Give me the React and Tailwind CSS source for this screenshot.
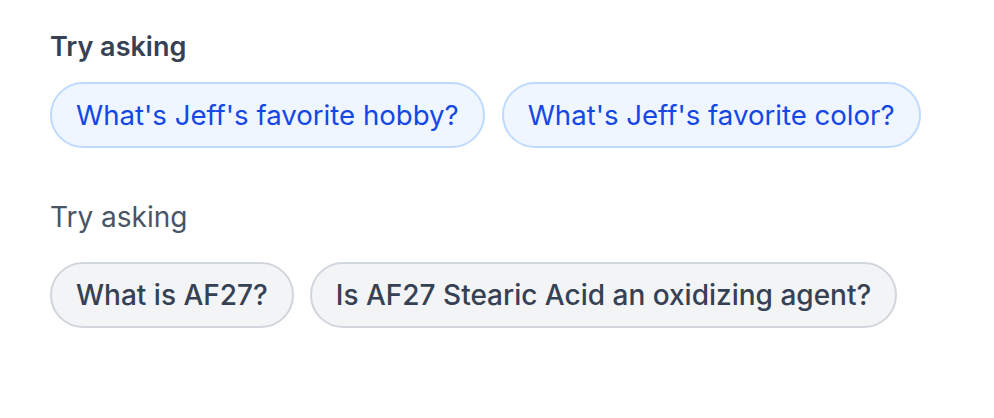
import React from 'react';

const blueQuestions = ["What's Jeff's favorite hobby?", "What's Jeff's favorite color?"];
const grayQuestions = ['What is AF27?', 'Is AF27 Stearic Acid an oxidizing agent?'];

const App = () => {
  return (
    <div className="w-[994px] h-[418px] bg-white pl-[50px] pt-[27px] font-['Inter',sans-serif]">
      <p className="text-[27px] leading-10 font-semibold text-gray-700 mb-[15px]">Try asking</p>
      <div className="flex gap-[17px]">
        {blueQuestions.map((q, i) => (
          <button
            key={i}
            className="px-6 py-[11px] text-[27.6px] leading-10 rounded-full border-2 border-blue-200 bg-blue-50 text-blue-700"
          >
            {q}
          </button>
        ))}
      </div>

      <p className="mt-[49px] mb-[25px] text-[28px] leading-10 text-gray-600">Try asking</p>
      <div className="flex gap-4">
        {grayQuestions.map((q, i) => (
          <button
            key={i}
            className="px-6 py-[11px] text-[28px] leading-10 font-medium rounded-full border-2 border-gray-300 bg-gray-100 text-gray-700"
          >
            {q}
          </button>
        ))}
      </div>
    </div>
  );
};

export default App;
